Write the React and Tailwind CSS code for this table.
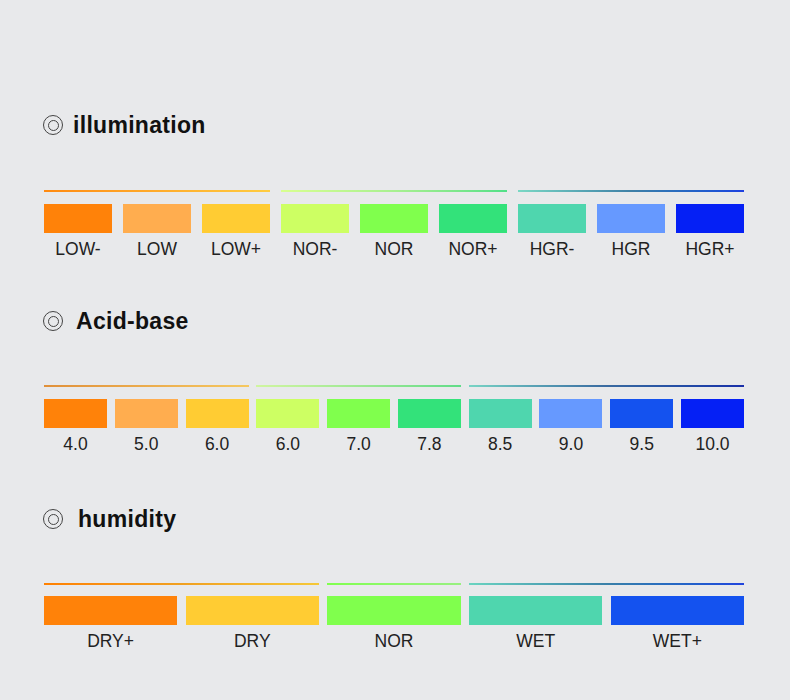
const font = { fontFamily: '"Liberation Sans", Arial, sans-serif' };

const illumination = [
  ["LOW-", "bg-[#ff8209]"],
  ["LOW", "bg-[#ffad4f]"],
  ["LOW+", "bg-[#ffcc33]"],
  ["NOR-", "bg-[#cdff63]"],
  ["NOR", "bg-[#80ff4d]"],
  ["NOR+", "bg-[#33e27a]"],
  ["HGR-", "bg-[#4fd6ae]"],
  ["HGR", "bg-[#6699ff]"],
  ["HGR+", "bg-[#0520f5]"],
];

const acid = [
  ["4.0", "bg-[#ff8209]"],
  ["5.0", "bg-[#ffad4f]"],
  ["6.0", "bg-[#ffcc33]"],
  ["6.0", "bg-[#cdff63]"],
  ["7.0", "bg-[#80ff4d]"],
  ["7.8", "bg-[#33e27a]"],
  ["8.5", "bg-[#4fd6ae]"],
  ["9.0", "bg-[#6699ff]"],
  ["9.5", "bg-[#1452ef]"],
  ["10.0", "bg-[#0520f5]"],
];

const humidity = [
  ["DRY+", "bg-[#ff8209]"],
  ["DRY", "bg-[#ffcc33]"],
  ["NOR", "bg-[#80ff4d]"],
  ["WET", "bg-[#4fd6ae]"],
  ["WET+", "bg-[#1452ef]"],
];

const Title = ({ text, gap }) => (
  <div className="flex h-[28px] items-center pl-[43px]">
    {/* ◎ mark */}
    <span className="flex h-[20px] w-[20px] items-center justify-center rounded-full border-[1.3px] border-[#444]">
      <span className="h-[11px] w-[11px] rounded-full border-[1.3px] border-[#444]" />
    </span>
    <span className={`${gap} text-[23px] font-bold tracking-[0.3px] text-[#111]`}>{text}</span>
  </div>
);

const Labels = ({ items, grid }) => (
  <div className={`${grid} mt-[6px]`}>
    {items.map(([label], i) => (
      <div key={i} className="h-[20px] text-center text-[17.5px] leading-[20px] text-[#222]">
        {label}
      </div>
    ))}
  </div>
);

const Bars = ({ items, grid, mt }) => (
  <div className={`${grid} ${mt}`}>
    {items.map(([label, color], i) => (
      <div key={i} className={`h-[29px] ${color}`} />
    ))}
  </div>
);

export default function App() {
  const grid9 = "grid grid-cols-9 gap-x-[11px]";
  const grid10 = "grid grid-cols-10 gap-x-[7.8px]";
  const grid5 = "grid grid-cols-5 gap-x-[8.5px]";

  return (
    <div className="h-[700px] w-[790px] overflow-hidden bg-[#e8e9eb] pt-[111px]" style={font}>
      {/* illumination */}
      <Title text="illumination" gap="ml-[10px]" />
      <div className="pl-[44px] pr-[46px]">
        <div className={`${grid9} mt-[51px]`}>
          <div className="col-span-3 h-[2px] bg-linear-to-r from-[#ff8a10] to-[#ffcc40]" />
          <div className="col-span-3 h-[2px] bg-linear-to-r from-[#d8ff90] via-[#a8f090] to-[#50e088]" />
          <div className="col-span-3 h-[2px] bg-linear-to-r from-[#7ad8c4] via-[#3f80a6] to-[#1f40e0]" />
        </div>
        <Bars items={illumination} grid={grid9} mt="mt-[12px]" />
        <Labels items={illumination} grid={grid9} />
      </div>

      {/* Acid-base */}
      <div className="mt-[48px]">
        <Title text="Acid-base" gap="ml-[13px]" />
      </div>
      <div className="pl-[44px] pr-[46px]">
        <div className={`${grid10} mt-[50px]`}>
          <div className="col-span-3 h-[2px] bg-linear-to-r from-[#e0903a] to-[#f5c860]" />
          <div className="col-span-3 h-[2px] bg-linear-to-r from-[#d0f5a0] to-[#60dc88]" />
          <div className="col-span-4 h-[2px] bg-linear-to-r from-[#78d4c4] via-[#3a6aa0] to-[#1a2ea8]" />
        </div>
        <Bars items={acid} grid={grid10} mt="mt-[12px]" />
        <Labels items={acid} grid={grid10} />
      </div>

      {/* humidity */}
      <div className="mt-[51px]">
        <Title text="humidity" gap="ml-[15px]" />
      </div>
      <div className="pl-[44px] pr-[46px]">
        <div className={`${grid5} mt-[50px]`}>
          <div className="col-span-2 h-[2px] bg-linear-to-r from-[#ff8000] via-[#f0a020] to-[#f5c838]" />
          <div className="h-[2px] bg-linear-to-r from-[#80ff4d] to-[#98f080]" />
          <div className="col-span-2 h-[2px] bg-linear-to-r from-[#6ad4c0] via-[#3a80a8] to-[#2244dd]" />
        </div>
        <Bars items={humidity} grid={grid5} mt="mt-[11px]" />
        <Labels items={humidity} grid={grid5} />
      </div>
    </div>
  );
}
